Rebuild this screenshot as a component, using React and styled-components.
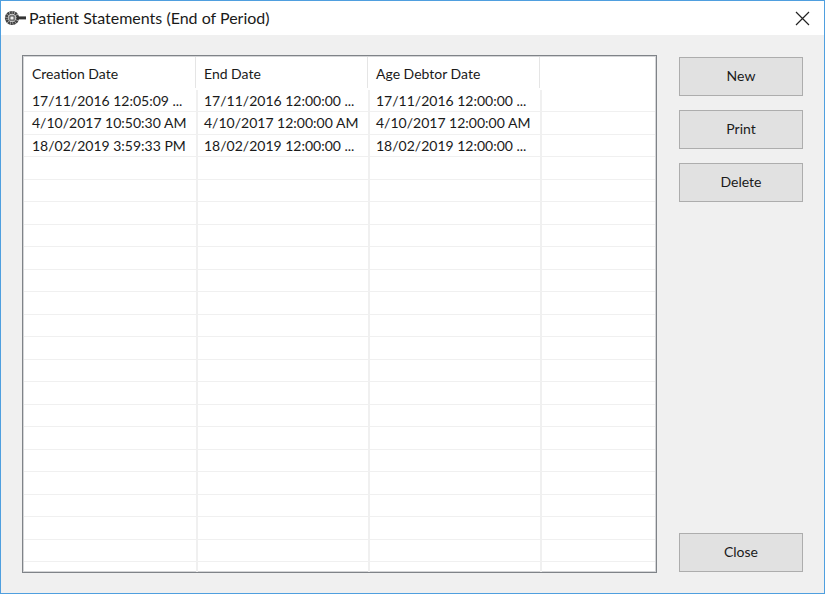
import React from 'react';
import styled, { createGlobalStyle } from 'styled-components';

const GlobalStyle = createGlobalStyle`
  html, body {
    margin: 0;
    padding: 0;
    background: #f0f0f0;
  }
`;

const Window = styled.div`
  width: 825px;
  height: 594px;
  box-sizing: border-box;
  border: 1px solid #4f9fdf;
  background: #f0f0f0;
  display: flex;
  flex-direction: column;
  font-family: "Lato", "Open Sans", sans-serif;
  color: #1a1a1a;
  overflow: hidden;
`;

const TitleBar = styled.div`
  height: 34px;
  background: #fff;
  display: flex;
  align-items: center;
  padding: 0 14px 0 3px;
  flex-shrink: 0;
`;

const Title = styled.div`
  font-size: 16px;
  margin: 0 0 1px 3px;
  flex: 1;
`;

const Content = styled.div`
  flex: 1;
  display: flex;
  justify-content: space-between;
  padding: 20px 21px 20px 21px;
`;

const ListView = styled.div`
  width: 635px;
  height: 518px;
  box-sizing: border-box;
  background: #fff;
  border: 1px solid #7f8388;
  box-shadow: inset 0 0 0 1px #d4d5d7;
  padding: 1px;
  overflow: hidden;
`;

const HeaderRow = styled.div`
  display: flex;
  height: 32.5px;
  padding-left: 1px;
`;

const HeaderCell = styled.div`
  width: 171px;
  height: 31px;
  margin-right: 1px;
  box-sizing: border-box;
  border-right: 1px solid #e5e5e5;
  padding: 7px 0 0 7px;
  font-size: 14px;
  line-height: 20px;
`;

const Row = styled.div`
  display: flex;
  height: 22.5px;
  padding-left: 2px;
  box-sizing: border-box;
  border-bottom: 1px solid #f0f0f0;

  &:last-child {
    border-bottom: none;
  }
`;

const Cell = styled.div`
  width: 172px;
  box-sizing: border-box;
  border-right: 2px solid #f0f0f0;
  padding-left: 6px;
  font-size: 14px;
  line-height: 22px;
  white-space: nowrap;
  overflow: hidden;
`;

const FillCell = styled.div`
  flex: 1;
`;

const ButtonColumn = styled.div`
  width: 124px;
  display: flex;
  flex-direction: column;
  gap: 14px;
  padding-top: 2px;
  height: 515px;
`;

const Button = styled.button`
  width: 124px;
  height: 39px;
  box-sizing: border-box;
  background: #e1e1e1;
  border: 1.5px solid #adadad;
  font-family: inherit;
  font-size: 14px;
  color: #1a1a1a;
  padding: 0 0 3px;
  ${(p) => p.$pushDown && 'margin-top: auto;'}
`;

const CloseIcon = () => (
  <svg width="15" height="15" viewBox="0 0 15 15" fill="none" stroke="#222" strokeWidth="1.2">
    <path d="M1 1 L14 14 M14 1 L1 14" />
  </svg>
);

const KeyIcon = () => (
  <svg width="22" height="16" viewBox="0 0 22 16">
    <circle cx="8" cy="8" r="5.6" fill="none" stroke="#444" strokeWidth="3" strokeDasharray="2.2 0.4" />
    <circle cx="8" cy="8" r="3.6" fill="#777" />
    <circle cx="8" cy="8" r="1.6" fill="#eee" />
    <rect x="13" y="6.4" width="9" height="3" fill="#333" />
  </svg>
);

const columns = ['Creation Date', 'End Date', 'Age Debtor Date'];

const rows = [
  ['17/11/2016 12:05:09 ...', '17/11/2016 12:00:00 ...', '17/11/2016 12:00:00 ...'],
  ['4/10/2017 10:50:30 AM', '4/10/2017 12:00:00 AM', '4/10/2017 12:00:00 AM'],
  ['18/02/2019 3:59:33 PM', '18/02/2019 12:00:00 ...', '18/02/2019 12:00:00 ...'],
];

const blankRows = Array.from({ length: 19 }, () => ['', '', '']);

const App = () => {
  return (
    <Window>
      <GlobalStyle />
      <TitleBar>
        <KeyIcon />
        <Title>Patient Statements (End of Period)</Title>
        <CloseIcon />
      </TitleBar>
      <Content>
        <ListView>
          <HeaderRow>
            {columns.map((c) => (
              <HeaderCell key={c}>{c}</HeaderCell>
            ))}
          </HeaderRow>
          {[...rows, ...blankRows].map((r, i) => (
            <Row key={i}>
              {r.map((v, j) => (
                <Cell key={j}>{v}</Cell>
              ))}
              <FillCell />
            </Row>
          ))}
        </ListView>
        <ButtonColumn>
          <Button>New</Button>
          <Button>Print</Button>
          <Button>Delete</Button>
          <Button $pushDown>Close</Button>
        </ButtonColumn>
      </Content>
    </Window>
  );
};

export default App;
